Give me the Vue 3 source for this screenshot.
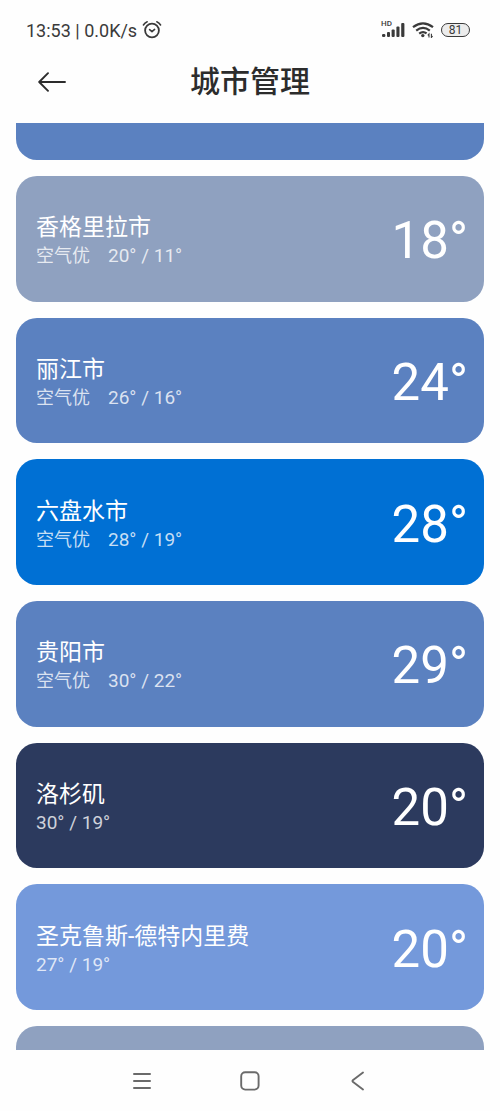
<script setup>
const cities = [
  { name: '香格里拉市', air: '空气优', range: '20° / 11°', temp: '18°', tone: 'haze' },
  { name: '丽江市', air: '空气优', range: '26° / 16°', temp: '24°', tone: 'cloud' },
  { name: '六盘水市', air: '空气优', range: '28° / 19°', temp: '28°', tone: 'clear' },
  { name: '贵阳市', air: '空气优', range: '30° / 22°', temp: '29°', tone: 'cloud' },
  { name: '洛杉矶', air: '', range: '30° / 19°', temp: '20°', tone: 'night' },
  { name: '圣克鲁斯-德特内里费', air: '', range: '27° / 19°', temp: '20°', tone: 'day' },
]
</script>

<template>
  <div class="screen">
    <div class="status">
      <div class="status-side">
        <span>13:53 | 0.0K/s</span>
        <svg class="alarm" width="20" height="20" viewBox="0 0 20 20" fill="none" stroke="#3a3a3a" stroke-linecap="round" aria-hidden="true">
          <circle cx="10" cy="10.5" r="6.9" stroke-width="1.8" />
          <path d="M7.6 9.6 L10 11.6 L12.6 9.4" stroke-width="1.6" stroke-linejoin="round" />
          <path d="M1.4 5 Q2.8 2.6 5.2 1.7 M18.6 5 Q17.2 2.6 14.8 1.7" stroke-width="1.5" />
        </svg>
      </div>
      <div class="status-side icons">
        <div class="signal">
          <span class="hd">HD</span>
          <svg width="24" height="16" viewBox="0 0 24 16" fill="#3a3a3a" aria-hidden="true">
            <rect x="1" y="12" width="3.4" height="3" rx="1.3" />
            <rect x="6" y="10" width="3" height="5" rx="1" />
            <rect x="10.6" y="7.5" width="3.1" height="7.5" rx="1" />
            <rect x="15.4" y="4.5" width="3.1" height="10.5" rx="1" />
            <rect x="20.2" y="1" width="3.2" height="14" rx="1" />
          </svg>
        </div>
        <svg width="22" height="16" viewBox="0 0 22 16" fill="none" stroke="#3a3a3a" stroke-width="2.2" aria-hidden="true">
          <path d="M1 5.2 Q11 -2.6 21 5.2" />
          <path d="M4.2 8.6 Q11 3.2 17.8 8.6" />
          <path d="M7.2 11.6 Q11 8.6 14.6 11.4" />
          <circle cx="10.8" cy="13.6" r="1.7" fill="#3a3a3a" stroke="none" />
          <path d="M17 15.6 V12 L15.8 13.4 M19.4 11.8 V15.4 L20.6 14" stroke-width="1.1" />
        </svg>
        <span class="battery">81</span>
      </div>
    </div>

    <header class="bar">
      <button class="back" type="button" aria-label="返回">
        <svg width="28" height="20" viewBox="0 0 28 20" fill="none" stroke="#2c2c2c" stroke-width="1.9" stroke-linecap="round" stroke-linejoin="round">
          <path d="M27 10 H1.4 M10 1.2 L1.2 10 L10 18.8" />
        </svg>
      </button>
      <h1>城市管理</h1>
    </header>

    <ul class="list">
      <li class="card cut-top cloud"></li>
      <li v-for="city in cities" :key="city.name" class="card" :class="city.tone">
        <div class="info">
          <div class="name">{{ city.name }}</div>
          <div class="detail">
            <span v-if="city.air">{{ city.air }}</span>
            <span class="range">{{ city.range }}</span>
          </div>
        </div>
        <div class="temp">{{ city.temp }}</div>
      </li>
      <li class="card cut-bottom haze"></li>
    </ul>

    <nav class="nav">
      <button type="button" aria-label="最近任务">
        <svg width="20" height="20" viewBox="0 0 20 20" fill="none" stroke="#6a6a6a" stroke-width="2" stroke-linecap="round">
          <path d="M2 3 H18 M2 10 H18 M2 17 H18" />
        </svg>
      </button>
      <button type="button" aria-label="主屏幕">
        <svg width="20" height="20" viewBox="0 0 20 20" fill="none" stroke="#6a6a6a" stroke-width="1.9">
          <rect x="1.2" y="1.2" width="17.4" height="17.4" rx="4" />
        </svg>
      </button>
      <button type="button" aria-label="返回上一级">
        <svg width="20" height="20" viewBox="0 0 20 20" fill="none" stroke="#6a6a6a" stroke-width="1.9" stroke-linecap="round" stroke-linejoin="round">
          <path d="M15 1.5 L4.8 9.2 Q4 10 4.8 10.8 L15 18.5" />
        </svg>
      </button>
    </nav>
  </div>
</template>

<style>
body {
  background: #fefefe;
}
</style>

<style scoped>
.screen {
  min-height: 100vh;
  display: flex;
  flex-direction: column;
  font-family: Roboto, "Noto Sans CJK SC", sans-serif;
  color: #2c2c2c;
}

.status {
  display: flex;
  justify-content: space-between;
  align-items: center;
  height: 24px;
  padding: 18px 30px 0 26px;
  color: #3a3a3a;
  font-size: 18px;
}

.status-side {
  display: flex;
  align-items: center;
  gap: 5px;
}

.icons {
  gap: 7px;
}

.signal {
  position: relative;
  display: flex;
}

.hd {
  position: absolute;
  left: 0;
  top: -2px;
  font-size: 8px;
  line-height: 8px;
  font-weight: 500;
}

.battery {
  box-sizing: border-box;
  width: 29px;
  height: 14px;
  border: 1px solid #3a3a3a;
  border-radius: 7px;
  background: #ececec;
  font-size: 12px;
  line-height: 12px;
  text-align: center;
}

.bar {
  display: grid;
  grid-template-columns: 60px 1fr 60px;
  align-items: center;
  height: 79px;
  padding: 0 22px 2px;
}

.back {
  display: flex;
  justify-content: center;
  padding: 12px 0;
}

button {
  border: 0;
  background: none;
}

h1 {
  margin: 0;
  font-size: 30px;
  line-height: 44px;
  font-weight: 500;
  text-align: center;
}

.list {
  flex: 1;
  display: grid;
  grid-template-rows: 37px repeat(6, minmax(96px, 1fr)) 24px;
  gap: 16px;
  margin: 0;
  padding: 0 16px;
  list-style: none;
}

.card {
  display: flex;
  justify-content: space-between;
  align-items: center;
  padding: 5px 16px 0 20px;
  border-radius: 21px;
  color: #fff;
}

.cut-top {
  border-radius: 0 0 21px 21px;
}

.cut-bottom {
  border-radius: 21px 21px 0 0;
}

.haze {
  background: #8fa1c0;
}

.cloud {
  background: #5b81c0;
}

.clear {
  background: #0070d4;
}

.night {
  background: #2c3a5e;
}

.day {
  background: #7499db;
}

.name {
  font-size: 23px;
  line-height: 30px;
}

.detail {
  display: flex;
  gap: 18px;
  font-size: 18px;
  line-height: 26px;
  color: rgba(255, 255, 255, 0.78);
}

.range {
  font-size: 19px;
}

.temp {
  font-size: 51px;
  line-height: 60px;
}

.nav {
  display: flex;
  justify-content: center;
  align-items: center;
  gap: 68px;
  height: 61px;
}

.nav button {
  display: flex;
  padding: 10px;
}
</style>
